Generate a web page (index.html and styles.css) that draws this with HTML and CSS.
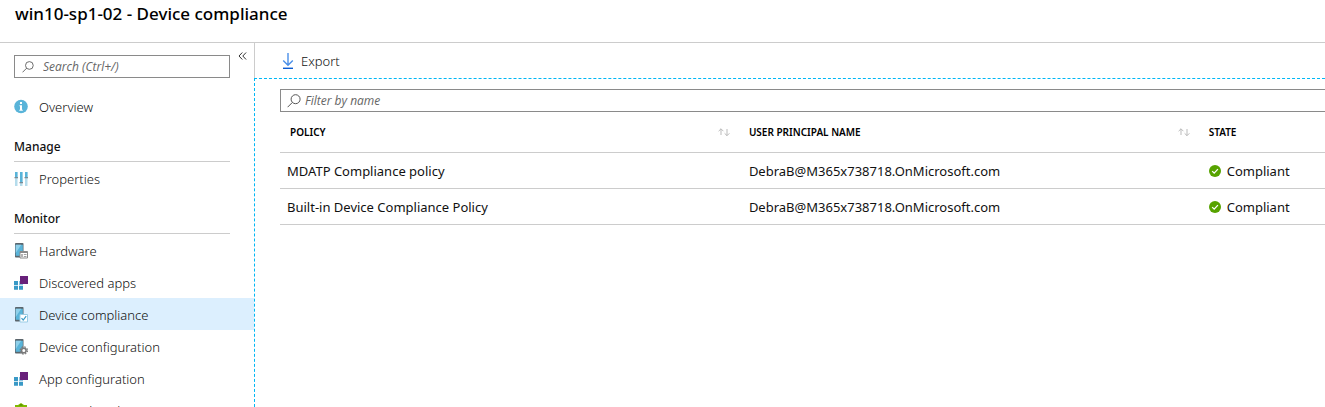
FILE: index.html
```html
<!DOCTYPE html>
<html lang="en">
<head>
<meta charset="utf-8">
<title>win10-sp1-02 - Device compliance</title>
<link rel="stylesheet" href="styles.css">
</head>
<body>
<svg class="defs" aria-hidden="true">
  <symbol id="search" viewBox="0 0 14 14"><circle cx="8.600" cy="5.200" r="4.500"/><path d="M5.400 8.400 L.6 13.200"/></symbol>
  <symbol id="phone" viewBox="0 0 14 16"><rect x="1" y="0" width="8.500" height="14.500" rx=".8" fill="#5b666d"/><rect x="1.700" y="1.800" width="7.100" height="11" fill="#59b4d9"/><path d="M1.700 1.800h5.500L1.700 10z" fill="#8fd0ea"/></symbol>
  <symbol id="apps" viewBox="0 0 14 14"><path d="M0 5h4v4H0zM0 9.800h4v4H0zM5 9.800h4v4H5z" fill="#3999c6"/><path d="M5 5h4v4H5z" fill="#8bc3e0"/><path d="M6 0h8v8H6z" fill="#68217a"/></symbol>
  <symbol id="sort" viewBox="0 0 12 9"><path d="M3 7V.8M.6 3.200 3 .8l2.400 2.400M9 1v6.700M6.600 5.300 9 7.700l2.400-2.400"/></symbol>
  <symbol id="ok" viewBox="0 0 12 12"><circle cx="6" cy="6" r="6" fill="#57a300"/><path d="m3.200 6.100 2 2 3.700-4" fill="none" stroke="#fff" stroke-width="1.300"/></symbol>
</svg>
<header class="blade-header"><h1>win10-sp1-02 - Device compliance</h1></header>
<div class="blade">
  <nav class="sidebar" aria-label="Device menu">
    <div class="menu-top">
      <label class="search menu-search"><svg class="lens"><use href="#search"/></svg><input type="text" placeholder="Search (Ctrl+/)" aria-label="Search menu"></label>
      <button class="collapse" aria-label="Collapse menu"><svg viewBox="0 0 9 8"><path d="M4.300.5 1 4l3.300 3.500M8.100.5 4.800 4l3.300 3.500"/></svg></button>
    </div>
    <a class="item" href="#"><svg class="icon" viewBox="0 0 14 16"><circle cx="7" cy="7.500" r="6.800" fill="#59b4d9"/><path d="M6 3h2v2H6zM5.500 6.200H8v4.600h.8v1H5.300v-1H6V7.200h-.5z" fill="#fff"/></svg>Overview</a>
    <h2>Manage</h2>
    <a class="item" href="#"><svg class="icon" viewBox="0 0 14 16"><path d="M1 1h2.500v14H1zM6 1h2.500v14H6zM11 1h2.500v14H11z" fill="#b5dcec"/><path d="M1 1h2.500v5H1zM6 1h2.500v10H6zM11 1h2.500v5H11z" fill="#59b4d9"/><path d="M.5 6H4v1.200H.5zM5.500 11H9v1.200H5.500zM10.500 6H14v1.200h-3.500z" fill="#7a8b94"/></svg>Properties</a>
    <h2>Monitor</h2>
    <a class="item" href="#"><svg class="icon" viewBox="0 0 14 16"><use href="#phone"/><path d="M6 8.500h7.500V15H6z" fill="#fff" stroke="#8a8a8a"/><path d="M6 8.500h7.500V10H6z" fill="#8a8a8a"/><path d="M7.200 11h1.600v3H7.200zM9.800 11h2.700v1H9.800zM9.800 13h2.700v1H9.800z" fill="#a0a1a2"/></svg>Hardware</a>
    <a class="item" href="#"><svg class="icon" viewBox="0 -1 14 16"><use href="#apps" width="14" height="14"/></svg>Discovered apps</a>
    <a class="item selected" href="#" aria-current="page"><svg class="icon" viewBox="0 0 14 16"><use href="#phone"/><path d="M6 7.500h7.500V15H6z" fill="#fff" stroke="#9bcde5"/><path d="m7.500 11.200 1.700 1.800 3-3.800" fill="none" stroke="#3999c6" stroke-width="1.200"/></svg>Device compliance</a>
    <a class="item" href="#"><svg class="icon" viewBox="0 0 14 16"><use href="#phone"/><circle cx="9.800" cy="11.500" r="3.600" fill="none" stroke="#7a7a7a" stroke-width="1.300" stroke-dasharray="1.600 1.230"/><circle cx="9.800" cy="11.500" r="2.300" fill="#fff" stroke="#7a7a7a" stroke-width="1.600"/></svg>Device configuration</a>
    <a class="item" href="#"><svg class="icon" viewBox="0 -1 14 16"><use href="#apps" width="14" height="14"/></svg>App configuration</a>
    <a class="item" href="#"><svg class="icon" viewBox="0 0 14 16"><path d="M1 2h3l3-2 3 2h3v6c0 4-3 6-6 7-3-1-6-3-6-7z" fill="#7fba00"/><path d="M5 2.500 7 1l2 1.500z" fill="#4b8400"/></svg>Security baselines</a>
  </nav>
  <main class="content">
    <div class="toolbar"><button class="export"><svg viewBox="0 0 12 16"><path d="M6 0v12M1.200 7.500 6 12.200l4.800-4.700" stroke="#4a8fe8"/><path d="M1 15.300h10" stroke="#0c5bd0"/></svg>Export</button></div>
    <section class="results">
      <label class="search filter"><svg class="lens"><use href="#search"/></svg><input type="text" placeholder="Filter by name" aria-label="Filter by name"></label>
      <table>
        <colgroup><col class="c-policy"><col class="c-user"><col></colgroup>
        <thead><tr>
          <th scope="col"><div class="head">POLICY<svg class="sort"><use href="#sort"/></svg></div></th>
          <th scope="col"><div class="head">USER PRINCIPAL NAME<svg class="sort"><use href="#sort"/></svg></div></th>
          <th scope="col">STATE</th></tr></thead>
        <tbody>
          <tr><td>MDATP Compliance policy</td><td>DebraB@M365x738718.OnMicrosoft.com</td><td><span class="state"><svg><use href="#ok"/></svg>Compliant</span></td></tr>
          <tr><td>Built-in Device Compliance Policy</td><td>DebraB@M365x738718.OnMicrosoft.com</td><td><span class="state"><svg><use href="#ok"/></svg>Compliant</span></td></tr>
        </tbody>
      </table>
    </section>
  </main>
</div>
</body>
</html>
```
FILE: styles.css
```css
* { box-sizing: border-box; }
body { margin: 0; height: 100vh; overflow: hidden; display: flex; flex-direction: column; background: #fff; color: #111; font: 13px/18px "Noto Sans", "Open Sans", sans-serif; }
.defs { display: none; }
svg { flex: none; }
button, input { font: inherit; color: inherit; border: 0; padding: 0; background: none; }
.blade-header { padding: 2px 15px 16px; border-bottom: 1px solid #ccc; }
h1 { margin: 0; font-size: 17px; line-height: 24px; font-weight: 500; color: #000; }
.blade { flex: 1; min-height: 0; display: flex; }
.sidebar { flex: none; width: 254px; overflow: hidden; }
.menu-top { display: flex; align-items: flex-start; gap: 8px; padding: 12px 8px 12px 14px; }
.search { display: flex; align-items: center; height: 23px; border: 1px solid #8a8a8a; }
.search input { flex: 1; min-width: 0; font-family: "Open Sans", sans-serif; font-size: 12px; outline: 0; }
.search input::placeholder { color: #666; font-style: italic; opacity: 1; }
.lens { width: 14px; height: 14px; fill: none; stroke: #555; }
.menu-search { flex: none; width: 216px; padding-left: 7px; gap: 9px; }
.menu-search .lens { width: 12px; height: 12px; }
.collapse { height: 8px; display: flex; margin-top: -3px; }
.collapse svg { width: 9px; height: 8px; fill: none; stroke: #333; }
.item { height: 32px; padding: 2px 0 0 14px; display: flex; align-items: center; gap: 11px; color: inherit; font-weight: 300; text-decoration: none; }
.item.selected { background: #dceffe; }
.icon { width: 14px; height: 16px; }
h2 { height: 40px; margin: 0 24px 0 14px; padding-top: 16px; border-bottom: 1px solid #ccc; font-size: 12px; line-height: 18px; font-weight: 500; }
.content { flex: 1; min-width: 0; display: flex; flex-direction: column; overflow: hidden; }
.toolbar { height: 35px; flex: none; display: flex; align-items: center; padding-left: 27px; border-left: 1px solid #ccc; }
.export { display: flex; align-items: center; gap: 7px; font-weight: 300; }
.export svg { width: 12px; height: 16px; fill: none; stroke-width: 1.4; }
.results { flex: 1; padding: 10px 0 0 25px; border: 1px dashed #00b7f5; border-width: 1px 0 0 1px; }
.filter { padding-left: 6px; gap: 4px; border-right: 0; }
table { width: 100%; border-collapse: collapse; table-layout: fixed; }
.c-policy { width: 44.2%; }
.c-user { width: 44%; }
th, td { text-align: left; padding: 1px 0 0 7px; border-bottom: 1px solid #ccc; }
th { height: 40px; font-size: 10px; font-weight: 600; color: #000; }
td { height: 36px; font-weight: 400; }
th:first-child { padding-left: 10px; }
.head { display: flex; justify-content: space-between; align-items: center; padding-right: 12px; }
.sort { width: 12px; height: 9px; fill: none; stroke: #bbb; }
.state { display: flex; align-items: center; gap: 6px; }
.state svg { width: 12px; height: 12px; }
```
